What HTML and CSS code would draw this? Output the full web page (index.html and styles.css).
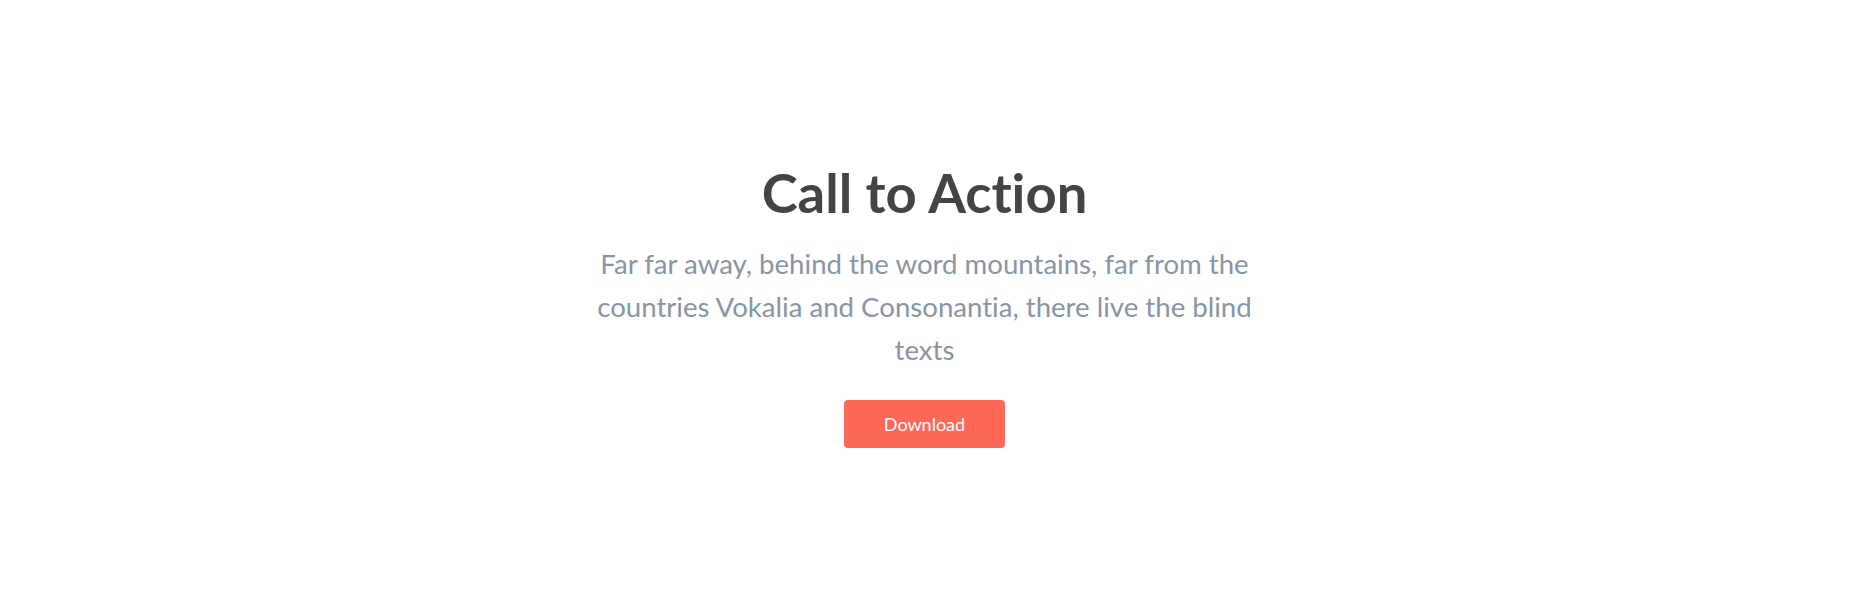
FILE: index.html
```html
<!DOCTYPE html>
<html lang="en">
<head>
<meta charset="utf-8">
<title>Call to Action</title>
<link rel="stylesheet" href="styles.css">
</head>
<body>
<section class="cta">
  <h1 class="cta-title">Call to Action</h1>
  <p class="cta-text">Far far away, behind the word mountains, far from the countries Vokalia and Consonantia, there live the blind texts</p>
  <a class="cta-button" href="#">Download</a>
</section>
</body>
</html>
```

FILE: styles.css
```css
html, body {
  margin: 0;
  padding: 0;
  background: #ffffff;
}
body {
  font-family: Lato, "Open Sans", Arial, sans-serif;
  font-variant-ligatures: none;
}
.cta {
  display: flex;
  flex-direction: column;
  align-items: center;
  padding-top: 160px;
  text-align: center;
}
.cta-title {
  margin: 0;
  font-size: 54.4px;
  line-height: 1.2;
  font-weight: 700;
  color: #444444;
}
.cta-text {
  margin: 17px 0 0;
  max-width: 680px;
  font-size: 27.6px;
  line-height: 43px;
  color: #8795a6;
}
.cta-button {
  margin-top: 29px;
  display: inline-flex;
  align-items: center;
  justify-content: center;
  width: 161px;
  height: 48px;
  box-sizing: border-box;
  border-radius: 4px;
  background: #ff6757;
  color: #ffffff;
  font-size: 18px;
  text-decoration: none;
}
```
